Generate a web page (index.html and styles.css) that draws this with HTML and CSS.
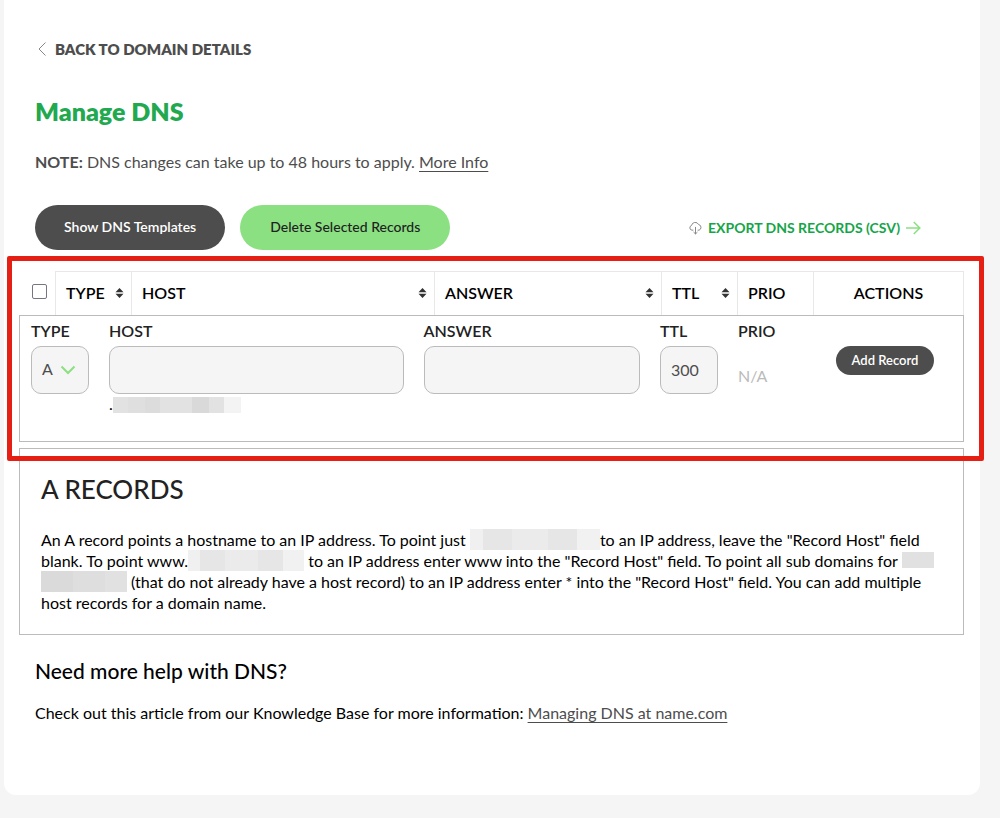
FILE: index.html
```
<!DOCTYPE html>
<html lang="en">
    <head>
        <meta charset="utf-8" />
        <title>Manage DNS</title>
        <meta name="viewport" content="width=device-width" />
        <link rel="stylesheet" href="styles.css">
    </head>
    <body>
        <main class="card">
            <a class="back" href="#">
                <svg width="10" height="16" viewBox="0 0 10 16"><path d="M8.500 1.500 2 8l6.500 6.500" fill="none" stroke="#888" /></svg>
                BACK TO DOMAIN DETAILS
            </a>

            <h1>Manage DNS</h1>
            <p class="note"><strong>NOTE:</strong> DNS changes can take up to 48 hours to apply. <a href="#">More Info</a></p>

            <div class="toolbar">
                <button type="button" class="btn dark">Show DNS Templates</button>
                <button type="button" class="btn green">Delete Selected Records</button>
                <a class="export" href="#">
                    <svg width="13" height="14" viewBox="0 0 12 13" fill="none" stroke="#777" stroke-width=".8"><path d="M4 8.500H2.800A2.200 2.200 0 0 1 2.300 4.200 3.500 3.500 0 0 1 8.900 3.300 2.700 2.700 0 0 1 9.300 8.500H8M6 5.500v6.500M4.200 10.300 6 12l1.800-1.700" /></svg>
                    EXPORT DNS RECORDS (CSV)
                    <svg width="15" height="14" viewBox="0 0 15 14" fill="none" stroke="#8be082" stroke-width="1.500"><path d="M0 7h13.500M7.800 1l6 6-6 6" /></svg>
                </a>
            </div>

            <div class="records">
                <table>
                    <thead>
                        <tr>
                            <th class="col-check"><input type="checkbox" aria-label="Select all records" /></th>
                            <th class="col-sm"><div class="sort">TYPE <svg width="9" height="10" viewBox="0 0 9 10"><path d="M4.500 0 8.500 4.300h-8zM4.500 10l4-4.300h-8z" fill="#333" /></svg></div></th>
                            <th class="col-host"><div class="sort">HOST <svg width="9" height="10" viewBox="0 0 9 10"><path d="M4.500 0 8.500 4.300h-8zM4.500 10l4-4.300h-8z" fill="#333" /></svg></div></th>
                            <th class="col-answer"><div class="sort">ANSWER <svg width="9" height="10" viewBox="0 0 9 10"><path d="M4.500 0 8.500 4.300h-8zM4.500 10l4-4.300h-8z" fill="#333" /></svg></div></th>
                            <th class="col-sm"><div class="sort">TTL <svg width="9" height="10" viewBox="0 0 9 10"><path d="M4.500 0 8.500 4.300h-8zM4.500 10l4-4.300h-8z" fill="#333" /></svg></div></th>
                            <th class="col-sm">PRIO</th>
                            <th class="col-actions">ACTIONS</th>
                        </tr>
                    </thead>
                    <tbody>
                        <tr>
                            <td colspan="7">
                                <form id="add-record">
                                    <div class="field">
                                        <label for="type">TYPE</label>
                                        <div class="select">
                                            <select id="type">
                                                <option>A</option>
                                            </select>
                                            <svg width="16" height="10" viewBox="0 0 16 10"><path d="M1.500 1.500 8 8l6.500-6.500" fill="none" stroke="#8be082" stroke-width="2" /></svg>
                                        </div>
                                    </div>
                                    <div class="field">
                                        <label for="host">HOST</label>
                                        <input type="text" id="host" />
                                        <div class="suffix">.<span class="hidden host-name"></span></div>
                                    </div>
                                    <div class="field">
                                        <label for="answer">ANSWER</label>
                                        <input type="text" id="answer" />
                                    </div>
                                    <div class="field">
                                        <label for="ttl">TTL</label>
                                        <input type="text" id="ttl" value="300" />
                                    </div>
                                    <div class="field">
                                        <span class="label">PRIO</span>
                                        <span class="na">N/A</span>
                                    </div>
                                    <button type="submit" class="btn dark small">Add Record</button>
                                </form>
                            </td>
                        </tr>
                    </tbody>
                </table>
            </div>

            <section class="info">
                <h2>A RECORDS</h2>
                <p>
                    An A record points a hostname to an IP address. To point just <span class="hidden name-1"></span>to an IP address, leave the "Record Host" field<br>
                    blank. To point www.<span class="hidden name-2"></span> to an IP address enter www into the "Record Host" field. To point all sub domains for <span class="hidden name-3"></span><br>
                    <span class="hidden name-4"></span> (that do not already have a host record) to an IP address enter * into the "Record Host" field. You can add multiple<br>
                    host records for a domain name.
                </p>
            </section>

            <section class="help">
                <h2>Need more help with DNS?</h2>
                <p>Check out this article from our Knowledge Base for more information: <a href="#">Managing DNS at name.com</a></p>
            </section>
        </main>
    </body>
</html>
```
FILE: styles.css
```
* {
    box-sizing: border-box;
}

body {
    margin: 0;
    background: #f5f5f5;
    color: #000;
    font: 16px/24px Lato, sans-serif;
}

h1, h2, p {
    margin: 0;
}

input, select, button {
    font: inherit;
}

.card {
    margin: 0 20px 23px 4px;
    padding: 39px 16px 70px 15px;
    background: #fff;
    border-radius: 0 0 12px 12px;
}

.back {
    display: flex;
    align-items: center;
    gap: 8px;
    margin-left: 18px;
    color: #4d4d4d;
    font-size: 15px;
    font-weight: 800;
    line-height: 20px;
    text-decoration: none;
}

h1 {
    margin: 36px 16px 0;
    color: #22a950;
    font-size: 25px;
    line-height: 32px;
    font-weight: 800;
}

.note {
    margin: 23px 16px 0;
    color: #4d4d4d;
}

.note a, .help a {
    color: #4d4d4d;
    text-underline-offset: 3px;
    text-decoration-thickness: 1px;
}

.toolbar {
    display: flex;
    align-items: center;
    gap: 15px;
    margin: 31px 43px 21px 16px;
}

.btn {
    height: 45px;
    padding: 0 29px 2px;
    border: 0;
    border-radius: 24px;
    font-size: 14px;
    cursor: pointer;
}

.dark {
    background: #4d4d4d;
    color: #fff;
    font-weight: 600;
}

.green {
    padding: 0 30px 2px;
    background: #8be082;
    color: #222;
    font-weight: 500;
}

.export {
    display: flex;
    align-items: center;
    gap: 6px;
    margin-left: auto;
    color: #15a548;
    font-size: 14px;
    font-weight: 700;
    text-decoration: none;
}

/* records table */
.records {
    position: relative;
}

/* highlight frame */
.records::after {
    content: "";
    position: absolute;
    inset: -15px -20px -19px -12px;
    border: 5px solid #e51f13;
    border-radius: 2px;
    pointer-events: none;
}

table {
    width: 100%;
    border-collapse: separate;
    border-spacing: 0;
    table-layout: fixed;
}

th {
    height: 44px;
    padding: 0 10px 2px;
    border: 1px solid #e8e8e8;
    border-width: 1px 0 0 1px;
    font-weight: 600;
    text-align: left;
}

th:last-child {
    border-right-width: 1px;
    text-align: center;
}

.col-sm {
    width: 76px;
}

.col-host {
    width: 303px;
}

.col-actions {
    width: 151px;
}

.col-check {
    width: 36px;
    padding: 0 0 3px 5px;
    border: 0;
}

.col-check input {
    display: block;
    width: 15px;
    height: 15px;
    margin: 0 auto;
    appearance: none;
    border: 1px solid #767683;
    border-radius: 2px;
    background: #fff;
}

.sort {
    display: flex;
    align-items: center;
    justify-content: space-between;
    margin-right: -3px;
}

td {
    padding: 0;
    border: 1px solid #bbb;
}

#add-record {
    display: grid;
    grid-template-columns: 58px 294fr 216fr 58px 78px 98px;
    column-gap: 20px;
    align-items: start;
    padding: 4px 29px 27px 11px;
}

.field {
    display: flex;
    flex-direction: column;
    min-width: 0;
}

.field label, .label {
    margin-bottom: 5px;
    color: #222;
    font-weight: 600;
    line-height: 21px;
}

.field input, .field select {
    width: 100%;
    height: 48px;
    padding: 0 10px 2px;
    border: 1px solid #bbb;
    border-radius: 10px;
    background: #f5f5f5;
    color: #4d4d4d;
    appearance: none;
}

.select {
    position: relative;
}

.select svg {
    position: absolute;
    right: 13px;
    top: 19px;
    pointer-events: none;
}

.suffix {
    display: flex;
    height: 20px;
    line-height: 20px;
}

.na {
    margin-top: 18px;
    color: #bbb;
}

.small {
    height: 29px;
    margin-top: 26px;
    padding: 0 0 2px;
    font-size: 13px;
}

/* pixelated domain names */
.hidden {
    display: inline-block;
    height: 21px;
    vertical-align: top;
    background: linear-gradient(90deg, #f0f0f0 10%, #e6e6e6 10% 32%, #ebebeb 32% 60%, #e6e6e6 60% 82%, #f1f1f1 82%);
}

.host-name {
    width: 128px;
    height: 16px;
    margin-top: 3px;
    background: linear-gradient(90deg, #e2e2e2 12%, #dfdfdf 12% 25%, #dcdcdc 25% 37%, #e2e2e2 37% 62%, #d9d9d9 62% 75%, #e2e2e2 75% 87%, #f3f3f3 87%);
}

.info {
    margin-top: 6px;
    padding: 24px 16px 21px 21px;
    border: 1px solid #bbb;
}

.info h2 {
    margin-bottom: 24px;
    color: #222;
    font-size: 26px;
    line-height: 32px;
    font-weight: 500;
}

.info p {
    line-height: 21px;
}

.name-1 {
    width: 130px;
}

.name-2 {
    width: 116px;
}

.name-3 {
    width: 32px;
    height: 16px;
    margin-top: 2px;
    background: #e1e1e1;
}

.name-4 {
    width: 86px;
    background: linear-gradient(90deg, #dadada 37%, #dedede 37% 75%, #e1e1e1 75%);
}

.help {
    padding: 22px 16px 0;
}

.help h2 {
    margin-bottom: 16px;
    font-size: 21px;
    line-height: 28px;
    font-weight: 500;
}
```
